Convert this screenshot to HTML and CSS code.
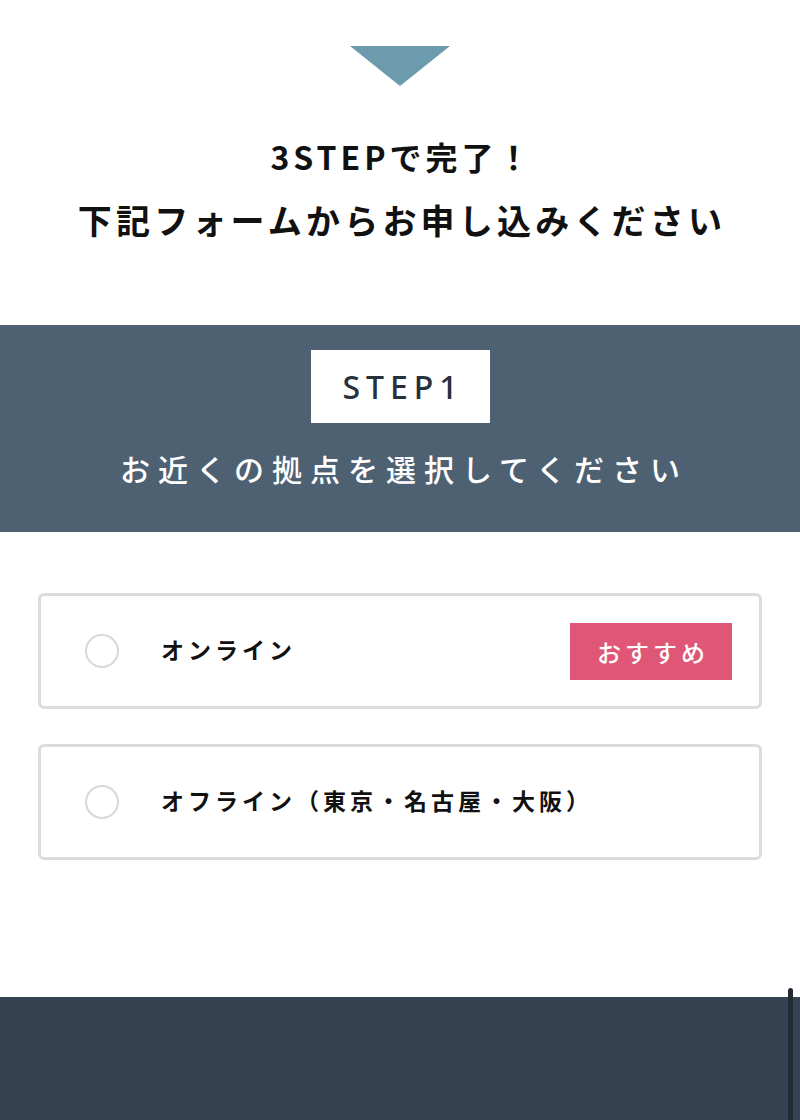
FILE: index.html
```html
<!DOCTYPE html>
<html lang="ja">
<head>
<meta charset="utf-8">
<link rel="stylesheet" href="styles.css">
</head>
<body>
<div class="page">
  <section class="intro">
    <div class="arrow"></div>
    <h1 class="title">
      <span class="t1">3STEPで完了！</span>
      <span class="t2">下記フォームからお申し込みください</span>
    </h1>
  </section>
  <section class="step">
    <div class="step-label">STEP1</div>
    <p class="step-text">お近くの拠点を選択してください</p>
  </section>
  <section class="options">
    <label class="option">
      <span class="radio"></span>
      <span class="opt-text">オンライン</span>
      <span class="badge">おすすめ</span>
    </label>
    <label class="option">
      <span class="radio"></span>
      <span class="opt-text">オフライン（東京・名古屋・大阪）</span>
    </label>
  </section>
  <footer class="footer"></footer>
  <div class="scrollbar"></div>
</div>
</body>
</html>
```
FILE: styles.css
```css
* { box-sizing: border-box; }
html, body { margin: 0; padding: 0; }
body {
  font-family: "Noto Sans CJK JP", "Noto Sans", sans-serif;
  background: #fff;
  color: #111;
}
.page {
  position: relative;
  width: 800px;
  height: 1120px;
  overflow: hidden;
  display: flex;
  flex-direction: column;
}
.intro {
  display: flex;
  flex-direction: column;
  align-items: center;
  padding-top: 46px;
  height: 325px;
}
.arrow {
  width: 0;
  height: 0;
  border-left: 50px solid transparent;
  border-right: 50px solid transparent;
  border-top: 40px solid #6b9bad;
}
.title {
  margin: 38px 0 0;
  display: flex;
  flex-direction: column;
  align-items: center;
  font-weight: 700;
  color: #111;
}
.t1 {
  font-size: 32px;
  line-height: 64px;
  letter-spacing: 4px;
  margin-left: 4px;
}
.t2 {
  font-size: 34px;
  line-height: 64px;
  letter-spacing: 4.2px;
  margin-left: 4px;
}
.step {
  background: #4e6172;
  height: 207px;
  display: flex;
  flex-direction: column;
  align-items: center;
  padding-top: 25px;
}
.step-label {
  background: #fff;
  width: 179px;
  height: 73px;
  display: flex;
  align-items: center;
  justify-content: center;
  font-family: "Noto Sans", "Noto Sans CJK JP", sans-serif;
  font-size: 32px;
  font-weight: 500;
  letter-spacing: 6px;
  padding-left: 6px;
  color: #27313b;
}
.step-text {
  margin: 23px 0 0 8px;
  color: #fff;
  font-size: 30px;
  font-weight: 500;
  letter-spacing: 8px;
  line-height: 44px;
}
.options {
  display: flex;
  flex-direction: column;
  gap: 35px;
  padding: 61px 38px 0;
  height: 465px;
}
.option {
  display: flex;
  align-items: center;
  height: 116px;
  border: 3px solid #dcdcdc;
  border-radius: 6px;
  padding: 0 27px 0 44px;
}
.radio {
  width: 34px;
  height: 34px;
  border: 2px solid #d8d8d8;
  border-radius: 50%;
  flex: none;
}
.opt-text {
  margin-left: 42px;
  font-size: 23px;
  line-height: 30px;
  margin-top: -4px;
  font-weight: 700;
  letter-spacing: 4px;
  color: #111;
  flex: 1;
}
.badge {
  background: #df5676;
  color: #fff;
  width: 162px;
  height: 57px;
  display: flex;
  align-items: center;
  justify-content: center;
  font-size: 24px;
  font-weight: 500;
  letter-spacing: 4px;
  padding-left: 4px;
}
.footer {
  flex: 1;
  background: #344252;
}
.scrollbar {
  position: absolute;
  right: 7px;
  top: 988px;
  width: 5px;
  height: 140px;
  border-radius: 3px;
  background: #222a33;
}
```
